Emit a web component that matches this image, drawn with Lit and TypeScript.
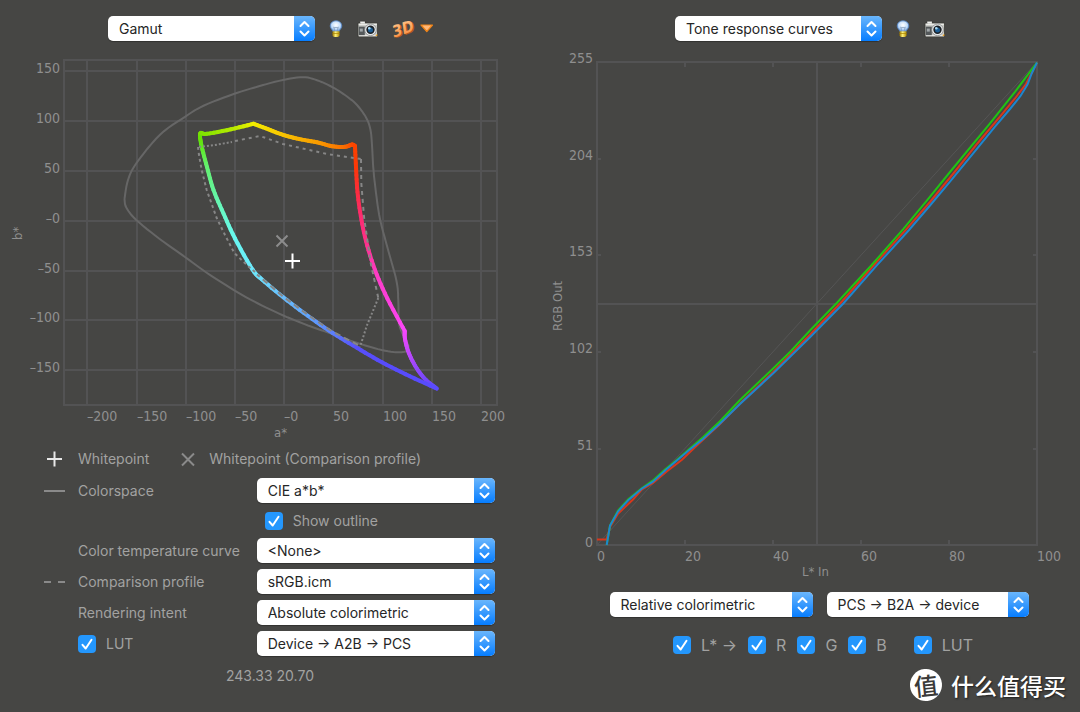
import { LitElement, html, svg, css } from "lit";
import { customElement, property } from "lit/decorators.js";

type Point = [number, number];
type Stop = [number, number, string];

/** Samples a Catmull-Rom spline through the points. */
function spline(points: Point[], steps = 6): Point[] {
  const out: Point[] = [points[0]];
  for (let i = 0; i < points.length - 1; i++) {
    const p0 = points[Math.max(i - 1, 0)];
    const p1 = points[i];
    const p2 = points[i + 1];
    const p3 = points[Math.min(i + 2, points.length - 1)];
    for (let s = 1; s <= steps; s++) {
      const t = s / steps;
      const at = (k: 0 | 1) =>
        0.5 *
        (2 * p1[k] +
          (p2[k] - p0[k]) * t +
          (2 * p0[k] - 5 * p1[k] + 4 * p2[k] - p3[k]) * t * t +
          (3 * p1[k] - p0[k] - 3 * p2[k] + p3[k]) * t * t * t);
      out.push([at(0), at(1)]);
    }
  }
  return out;
}

const toPoints = (pts: Point[]) => pts.map((p) => `${p[0].toFixed(1)},${p[1].toFixed(1)}`).join(" ");

function mix(a: string, b: string, t: number): string {
  const ch = (c: string, i: number) => parseInt(c.slice(1 + i * 2, 3 + i * 2), 16);
  const v = [0, 1, 2].map((i) => Math.round(ch(a, i) + (ch(b, i) - ch(a, i)) * t));
  return `rgb(${v.join(",")})`;
}

const SPACE_OUTLINE: Point[] = [
  [124.5, 199], [126.3, 207.5], [136, 219.7], [160, 239.2], [185.3, 257.2], [206.7, 272.7], [234.3, 290.3],
  [258, 303.5], [283.3, 315.5], [308, 325.5], [333, 334.3], [356.7, 342.8], [381.7, 350], [398, 352.3], [406.5, 351],
  [408.5, 346], [403.5, 336], [399, 323], [398.3, 300], [396.5, 281], [387.3, 247], [380, 219], [376, 193],
  [373.3, 168], [372, 145], [370.5, 130], [366.3, 118], [357, 105], [346, 95.8], [332.7, 87.3], [317, 80.2],
  [303, 77.2], [283, 80], [258, 86.5], [233, 94.3], [204, 105.5], [185, 116.8], [160, 134.8], [136.5, 163],
  [128, 180], [124.5, 199],
];

const DEVICE_GAMUT: Stop[][] = [
  [
    [200, 137, "#72e010"], [200.7, 133, "#78e000"], [207, 133.8, "#86e400"], [231, 129.3, "#b4ea00"],
    [253.5, 123.7, "#f4f000"],
  ],
  [
    [253.5, 123.7, "#f4f000"], [268, 129.2, "#f6d800"], [283, 134.8, "#f8c400"], [299, 139, "#f8b000"],
    [317, 142.3, "#f89c00"], [332, 146.2, "#fa8400"], [345, 146.8, "#fa6c00"], [352, 144.6, "#fa4c00"],
    [355, 146, "#fa4400"],
  ],
  [
    [355, 146, "#fa4400"], [356, 167, "#fc3808"], [357.5, 192, "#fc2c40"], [360.8, 216, "#fc2c70"],
    [366, 241, "#fc3088"], [375, 270, "#fc3cc0"], [387.3, 298.3, "#fc40dc"], [404.7, 331, "#fa48fc"],
  ],
  [
    [404.7, 331, "#fa48fc"], [405, 339, "#e848fc"], [408.8, 353, "#c048fc"], [416.7, 368.3, "#9448fc"],
    [426, 380, "#7448fc"], [436.7, 388.5, "#5c4cfc"],
  ],
  [
    [436.7, 388.5, "#5a4cfc"], [410, 376.3, "#584cfc"], [382, 362.3, "#584cfc"], [357, 347.8, "#5850fa"],
    [332.7, 333, "#5c80fc"], [308, 316, "#60a4fc"], [283.3, 297.3, "#68bcfc"], [262, 279.5, "#6cdcfc"],
    [252.5, 269.5, "#6ce8fc"], [235, 238.5, "#68f8f0"], [223.5, 213.5, "#68f8c8"], [213.5, 190, "#64f498"],
    [207, 167, "#64f070"], [201.8, 147, "#60e820"], [200, 137, "#68e000"],
  ],
];

const COMPARISON: { pts: Point[]; dash: string }[] = [
  { pts: [[199, 147], [215, 145], [232, 142]], dash: "2 2" },
  { pts: [[235, 141], [260, 136], [283, 144], [327, 154], [361, 159]], dash: "3 4" },
  { pts: [[361, 159], [361.3, 183], [364, 217], [370.7, 263], [378.3, 298]], dash: "4 4" },
  { pts: [[378.3, 298], [366.7, 326], [360, 347]], dash: "2 2" },
  { pts: [[358, 345], [331, 330.7], [308, 315], [283, 296.5], [257, 274.5]], dash: "6 4" },
  { pts: [[255, 272], [248, 266], [234.3, 253], [225, 235], [216.7, 218], [206.7, 190], [201.7, 170], [199, 155], [198, 147]], dash: "3 3" },
];

const RED: Point[] = [
  [57, 539.5], [66, 539.5], [66.5, 539.5], [70.3, 526.5], [78, 513.7], [93, 499.5], [102, 489.3], [113, 483],
  [127, 471.3], [142, 459.7], [155, 447.3], [180, 424], [200, 403.5], [233, 372.3], [270, 334.8], [302, 301.5],
  [334, 265], [366, 229.7], [390, 202], [415, 171.5], [437, 144], [460, 116.7], [475, 98.5], [486, 84], [497, 62.5],
];
const GREEN: Point[] = [
  [66.7, 545], [70, 525.7], [78, 510.5], [88.3, 499.3], [101.7, 488.2], [112.7, 480.7], [125, 469.5], [137, 459.7],
  [149, 449.3], [163, 437.3], [180, 421.3], [200, 400], [230, 371.5], [250, 352], [270, 330.5], [297, 302.8],
  [331.7, 265], [363, 229.3], [387, 200.3], [410, 172], [450, 123.3], [475, 91.8], [497, 62.5],
];
const BLUE: Point[] = [
  [66.7, 545], [70, 525.7], [78, 511.5], [88.3, 500.3], [101.7, 488.7], [113, 481.7], [126, 469.7], [149, 450.3],
  [163, 439], [179, 424.5], [200, 404], [233.3, 373.3], [270, 337.3], [303.3, 303.5], [337, 265.2], [369, 230],
  [390, 205.5], [410, 181.7], [433, 153.7], [455, 126.7], [470, 109], [480.5, 96], [487.5, 84.5], [491.7, 73.5],
  [497, 62.5],
];

const plotStyles = css`
  :host {
    display: block;
  }
  svg {
    display: block;
    width: 100%;
    height: auto;
  }
  text {
    font-family: "DejaVu Sans Condensed", "DejaVu Sans", sans-serif;
    font-size: 14px;
    fill: #8f8f8f;
  }
  .title {
    font-size: 13px;
  }
  .end {
    text-anchor: end;
  }
  .grid {
    stroke: #535354;
    stroke-width: 2;
    fill: none;
  }
  .outline {
    stroke: #666666;
    stroke-width: 2;
    fill: none;
  }
  .gamut {
    stroke-width: 4;
    stroke-linecap: round;
  }
  .comparison {
    stroke: #868686;
    stroke-width: 2;
    fill: none;
  }
  .white {
    stroke: #ffffff;
    stroke-width: 2;
  }
  .grey {
    stroke: #8c8c8c;
    stroke-width: 2;
  }
  .curve {
    stroke-width: 2;
    fill: none;
  }
  .diagonal {
    stroke: #555555;
    stroke-width: 1;
  }
`;

@customElement("gamut-plot")
export class GamutPlot extends LitElement {
  static styles = plotStyles;

  private segments() {
    const out: unknown[] = [];
    const steps = 6;
    for (const side of DEVICE_GAMUT) {
      const pts = spline(side.map((s) => [s[0], s[1]] as Point), steps);
      for (let i = 0; i < pts.length - 1; i++) {
        const k = Math.floor(i / steps);
        const color = mix(side[k][2], side[k + 1][2], (i % steps) / steps);
        out.push(svg`<line class="gamut" stroke=${color}
          x1=${pts[i][0]} y1=${pts[i][1]} x2=${pts[i + 1][0]} y2=${pts[i + 1][1]}></line>`);
      }
    }
    return out;
  }

  render() {
    const xs = ["–200", "–150", "–100", "–50", "–0", "50", "100", "150", "200"];
    const ys = ["150", "100", "50", "–0", "–50", "–100", "–150"];
    const gx = (i: number) => Math.round(87.3 + i * 49.2);
    const gy = (i: number) => Math.round(71.3 + i * 49.8);
    return html`<svg viewBox="0 48 540 396" role="img" aria-label="Gamut">
      <rect class="grid" x="64" y="60" width="433" height="345"></rect>
      ${xs.map((_, i) => svg`<line class="grid" x1=${gx(i)} x2=${gx(i)} y1="60" y2="405"></line>`)}
      ${ys.map((_, i) => svg`<line class="grid" y1=${gy(i)} y2=${gy(i)} x1="64" x2="497"></line>`)}
      ${xs.map((t, i) => svg`<text x=${gx(i)} y="421">${t}</text>`)}
      ${ys.map((t, i) => svg`<text class="end" x="60" y=${gy(i) + 2}>${t}</text>`)}
      <text class="title" x="274" y="437">a*</text>
      <text class="title" transform="translate(22 240) rotate(-90)">b*</text>
      <polyline class="outline" points=${toPoints(spline(SPACE_OUTLINE))}></polyline>
      ${this.segments()}
      ${COMPARISON.map((c) => svg`<polyline class="comparison" stroke-dasharray=${c.dash} points=${toPoints(c.pts)}></polyline>`)}
      <path class="grey" d="M276.500 235.500l11 11m0-11l-11 11"></path>
      <path class="white" d="M285 261h15M292.500 253.500v15"></path>
    </svg>`;
  }
}

@customElement("tone-plot")
export class TonePlot extends LitElement {
  static styles = plotStyles;

  render() {
    const xs = [0, 20, 40, 60, 80, 100];
    const ys = [255, 204, 153, 102, 51, 0];
    const gx = (i: number) => 57 + i * 88;
    const gy = (i: number) => Math.round(62 + i * 96.7);
    const inner = [1, 2, 3, 4];
    return html`<svg viewBox="0 48 540 536" role="img" aria-label="Tone response curves">
      <rect class="grid" x="57" y="62" width="440" height="483"></rect>
      <path class="grid" d="M277 62v483M57 304h440"></path>
      ${inner.map((i) => svg`<path class="grid" d="M${gx(i)} 62v5M${gx(i)} 545v-5M57 ${gy(i)}h4M497 ${gy(i)}h-4"></path>`)}
      <line class="diagonal" x1="57" y1="545" x2="497" y2="62"></line>
      ${xs.map((t, i) => svg`<text x=${gx(i)} y="561">${t}</text>`)}
      ${ys.map((t, i) => svg`<text class="end" x="53" y=${gy(i) + 1}>${t}</text>`)}
      <text class="title" x="262" y="576">L* In</text>
      <text class="title" transform="translate(22 331) rotate(-90)">RGB Out</text>
      <polyline class="curve" stroke="#d8371c" points=${toPoints(RED)}></polyline>
      <polyline class="curve" stroke="#1fc412" points=${toPoints(GREEN)}></polyline>
      <polyline class="curve" stroke="#1d86d0" points=${toPoints(BLUE)}></polyline>
    </svg>`;
  }
}

@customElement("pop-up")
export class PopUp extends LitElement {
  @property() label = "";
  @property({ type: Array }) options: string[] = [];

  static styles = css`
    :host {
      display: block;
      min-width: 0;
    }
    .box {
      display: grid;
      grid-template-columns: 1fr 21px;
      height: 25px;
      border-radius: 5px;
      overflow: hidden;
      background: #ffffff;
      box-shadow: 0 1px 1px rgba(0, 0, 0, 0.3);
    }
    select {
      grid-area: 1 / 1 / 2 / 3;
      appearance: none;
      width: 100%;
      height: 25px;
      margin: 0;
      padding: 0 24px 0 11px;
      border: 0;
      background: transparent;
      color: #262626;
      font: 14px/25px Inter, sans-serif;
    }
    .arrows {
      grid-area: 1 / 2 / 2 / 3;
      background: linear-gradient(#6ab6fc, #067dff);
      pointer-events: none;
    }
    svg {
      display: block;
      width: 21px;
      height: 25px;
    }
    path {
      fill: none;
      stroke: #ffffff;
      stroke-width: 2;
      stroke-linecap: round;
      stroke-linejoin: round;
    }
  `;

  render() {
    return html`<div class="box">
      <select aria-label=${this.label}>
        ${this.options.map((o) => html`<option>${o}</option>`)}
      </select>
      <span class="arrows"
        ><svg viewBox="0 0 21 25"><path d="M6.500 10l4-4 4 4M6.500 15.500l4 4 4-4"></path></svg
      ></span>
    </div>`;
  }
}

@customElement("check-box")
export class CheckBox extends LitElement {
  @property() label = "";

  static styles = css`
    :host {
      display: block;
    }
    label {
      display: flex;
      align-items: center;
      gap: 10px;
      color: #a2a2a1;
      white-space: nowrap;
    }
    .tick {
      display: grid;
      width: 18px;
      height: 18px;
    }
    input {
      grid-area: 1 / 1;
      appearance: none;
      width: 18px;
      height: 18px;
      margin: 0;
      border-radius: 4px;
      background: #666666;
    }
    input:checked {
      background: #2497fd;
    }
    svg {
      grid-area: 1 / 1;
      width: 18px;
      height: 18px;
      pointer-events: none;
      visibility: hidden;
    }
    input:checked + svg {
      visibility: visible;
    }
    path {
      fill: none;
      stroke: #ffffff;
      stroke-width: 2;
      stroke-linecap: round;
      stroke-linejoin: round;
    }
  `;

  render() {
    return html`<label>
      <span class="tick">
        <input type="checkbox" checked />
        <svg viewBox="0 0 18 18"><path d="M4.500 9.800l3.200 3.700 5.800-8.700"></path></svg>
      </span>
      <span>${this.label}</span>
    </label>`;
  }
}

const bulb = html`<svg width="14" height="18" viewBox="0 0 14 18">
  <defs>
    <radialGradient id="glass" cx="0.5" cy="0.4" r="0.6">
      <stop offset="0" stop-color="#ffffff"></stop>
      <stop offset="0.6" stop-color="#c4defa"></stop>
      <stop offset="1" stop-color="#6a9ad8"></stop>
    </radialGradient>
    <linearGradient id="brass">
      <stop offset="0" stop-color="#9c7800"></stop>
      <stop offset="0.45" stop-color="#fff27a"></stop>
      <stop offset="1" stop-color="#b08a00"></stop>
    </linearGradient>
  </defs>
  <path d="M7 .8C3.400.8 1.200 3.200 1.200 6c0 2.600 2.300 3.400 2.600 5.400h6.400c.3-2 2.600-2.800 2.600-5.400C12.800 3.200 10.600.8 7 .8z"
    fill="url(#glass)" stroke="#5685c4" stroke-width=".8"></path>
  <path d="M5.800 11.200L4.700 7l1.300 1.200L7 7l1 1.200L9.300 7l-1.100 4.200" fill="none" stroke="#7b95b5" stroke-width=".7"></path>
  <path d="M3.500 11.300h7v4.200l-1.300 1.500H4.800l-1.300-1.500z" fill="url(#brass)"></path>
  <path d="M3.500 13.500h7" stroke="#a88200" stroke-width=".7"></path>
</svg>`;

const camera = html`<svg width="22" height="18" viewBox="0 0 22 18">
  <path d="M1 3h2.500V1.300h4.500V3h12.500v13.700H1z" fill="#c9cac6" stroke="#373733" stroke-width=".8"></path>
  <path d="M1.800 6.600h6v9h-6z" fill="#54585a"></path>
  <path d="M1.800 4.300h18M2 15.800h18" stroke="#f3f3ef" stroke-width="1"></path>
  <path d="M2.800 8.600h3v3h-3z" fill="#a2a8aa"></path>
  <path d="M3 2.200h5" stroke="#fff" stroke-width="1"></path>
  <circle cx="13.500" cy="9.800" r="5.800" fill="#eceeee" stroke="#77797a" stroke-width=".7"></circle>
  <circle cx="13.500" cy="9.800" r="4.200" fill="#1b2026"></circle>
  <circle cx="13.500" cy="10.100" r="2.500" fill="#1c5d94"></circle>
  <circle cx="12.300" cy="8.300" r="1.300" fill="#a5d6f2"></circle>
  <path d="M18.300 16l2-2.300V16z" fill="#f0a018"></path>
</svg>`;

const cube = html`<svg class="cube" width="40" height="22" viewBox="0 0 40 22">
  <defs>
    <linearGradient id="amber" x2="0" y2="1">
      <stop offset="0" stop-color="#ffc890"></stop>
      <stop offset="1" stop-color="#f8863a"></stop>
    </linearGradient>
  </defs>
  <g transform="rotate(-18 11 11)" font-family="DejaVu Sans Condensed, DejaVu Sans, sans-serif" font-size="16" font-weight="bold" font-style="italic">
    <text x="0" y="17" fill="#b05a1c">3D</text>
    <text x="-1" y="16" fill="url(#amber)">3D</text>
  </g>
  <path d="M28 7h11.500l-5.700 6.500z" fill="#ffb878" stroke="#f08418" stroke-width="1.200" stroke-linejoin="round"></path>
</svg>`;

@customElement("app-root")
export class AppRoot extends LitElement {
  static styles = css`
    :host {
      display: grid;
      grid-template-columns: 1fr 1fr;
      position: relative;
      min-height: 100vh;
      background: #464644;
      color: #a2a2a1;
      font: 14px/20px Inter, sans-serif;
    }
    section {
      min-width: 0;
    }
    header {
      display: flex;
      justify-content: center;
      align-items: center;
      gap: 14px;
      padding: 16px 0 7px 1px;
    }
    .view {
      width: 207px;
    }
    button {
      display: block;
      padding: 0;
      border: 0;
      background: none;
    }
    button svg {
      display: block;
    }
    .cube {
      overflow: visible;
    }
    .legend {
      display: flex;
      align-items: center;
      height: 30px;
      padding-left: 44px;
    }
    .mark {
      display: block;
      width: 22px;
      margin-right: 12px;
    }
    .mark path {
      fill: none;
      stroke: #8a8a8a;
      stroke-width: 2;
    }
    .mark .light {
      stroke: #e8e8e8;
    }
    .legend .second {
      margin: 0 10px 0 28px;
    }
    .controls {
      display: grid;
      grid-template-columns: 34px 3fr 4fr;
      grid-template-rows: 25px 23px repeat(4, 25px);
      row-gap: 6px;
      align-items: center;
      padding: 4px 45px 0 44px;
    }
    .controls > .name {
      grid-column: 2;
      white-space: nowrap;
    }
    .controls > .value {
      grid-column: 3;
    }
    .controls > .inset {
      padding-left: 8px;
    }
    .readout {
      margin: 10px 0 0;
      text-align: center;
    }
    .pair {
      display: grid;
      grid-template-columns: 203px 202px;
      justify-content: center;
      gap: 14px;
      padding: 8px 0 0 18px;
    }
    .channels {
      display: flex;
      justify-content: center;
      gap: 11px;
      padding: 18px 0 0 26px;
      font-size: 16px;
    }
    .channels .lut {
      padding-left: 16px;
    }
    .brand {
      position: absolute;
      right: 14px;
      bottom: 11px;
      display: flex;
      align-items: center;
      gap: 9px;
      color: #ffffff;
      font: 500 23px/32px "Noto Sans CJK SC", sans-serif;
      text-shadow: 1px 1px 2px rgba(0, 0, 0, 0.6);
    }
    .seal {
      width: 32px;
      height: 32px;
      border-radius: 50%;
      background: #ffffff;
      color: #3a3a39;
      font-size: 24px;
      line-height: 31px;
      text-align: center;
      text-shadow: none;
      transform: rotate(-6deg);
    }
  `;

  render() {
    return html`
      <section>
        <header>
          <pop-up class="view" label="View" .options=${["Gamut"]}></pop-up>
          <button aria-label="Toggle light">${bulb}</button>
          <button aria-label="Save image">${camera}</button>
          <button aria-label="3D view">${cube}</button>
        </header>
        <gamut-plot></gamut-plot>
        <div class="legend">
          <svg class="mark" height="16" viewBox="0 0 22 16"><path class="light" d="M3 8h15M10.500 0.500v15"></path></svg>
          <span>Whitepoint</span>
          <svg class="mark second" height="16" viewBox="0 0 22 16"><path d="M5 2.500l12 12m0-12l-12 12"></path></svg>
          <span>Whitepoint (Comparison profile)</span>
        </div>
        <div class="controls">
          <svg class="mark" height="4" viewBox="0 0 22 4"><path d="M0 2h21"></path></svg>
          <span class="name">Colorspace</span>
          <pop-up class="value" label="Colorspace" .options=${["CIE a*b*"]}></pop-up>
          <check-box class="value inset" label="Show outline"></check-box>
          <span class="name">Color temperature curve</span>
          <pop-up class="value" label="Color temperature curve" .options=${["<None>"]}></pop-up>
          <svg class="mark" height="4" viewBox="0 0 22 4"><path d="M0 2h7m7 0h7"></path></svg>
          <span class="name">Comparison profile</span>
          <pop-up class="value" label="Comparison profile" .options=${["sRGB.icm"]}></pop-up>
          <span class="name">Rendering intent</span>
          <pop-up class="value" label="Rendering intent" .options=${["Absolute colorimetric"]}></pop-up>
          <check-box class="name" label="LUT"></check-box>
          <pop-up class="value" label="Lookup direction" .options=${["Device → A2B → PCS"]}></pop-up>
        </div>
        <p class="readout">243.33 20.70</p>
      </section>
      <section>
        <header>
          <pop-up class="view" label="View" .options=${["Tone response curves"]}></pop-up>
          <button aria-label="Toggle light">${bulb}</button>
          <button aria-label="Save image">${camera}</button>
        </header>
        <tone-plot></tone-plot>
        <div class="pair">
          <pop-up label="Rendering intent" .options=${["Relative colorimetric"]}></pop-up>
          <pop-up label="Lookup direction" .options=${["PCS → B2A → device"]}></pop-up>
        </div>
        <div class="channels">
          <check-box label="L* →"></check-box>
          <check-box label="R"></check-box>
          <check-box label="G"></check-box>
          <check-box label="B"></check-box>
          <check-box class="lut" label="LUT"></check-box>
        </div>
      </section>
      <div class="brand"><span class="seal">值</span><span>什么值得买</span></div>
    `;
  }
}
